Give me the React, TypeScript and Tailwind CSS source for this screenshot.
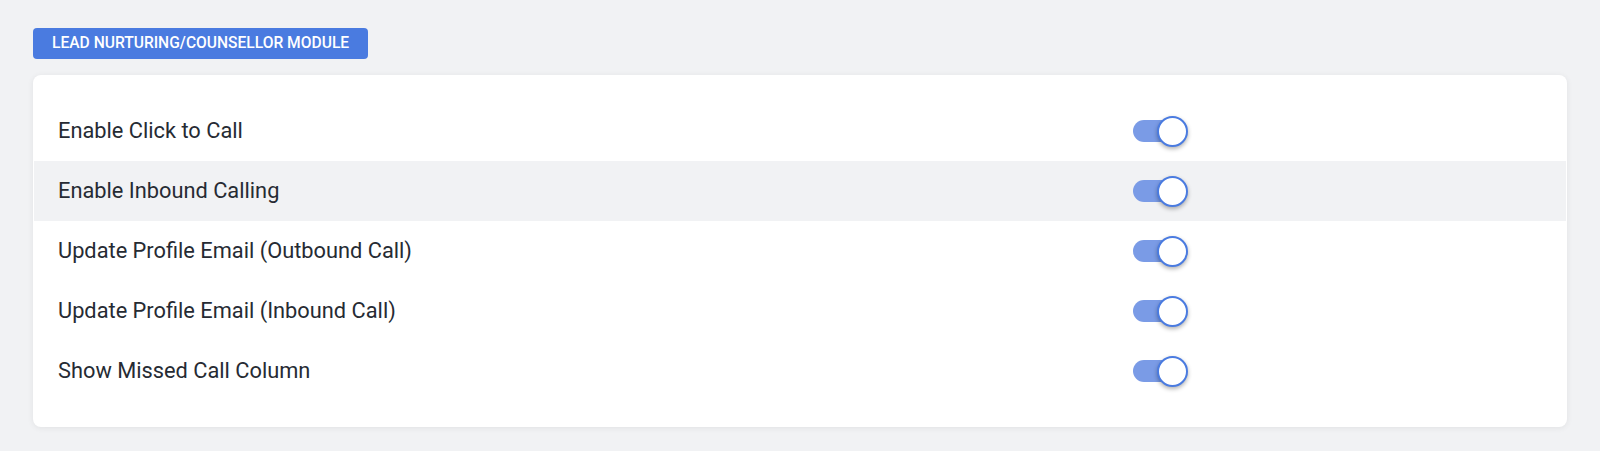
import React, { useState } from 'react';

const rows = [
  'Enable Click to Call',
  'Enable Inbound Calling',
  'Update Profile Email (Outbound Call)',
  'Update Profile Email (Inbound Call)',
  'Show Missed Call Column',
];

const Toggle = ({ on, onClick }: { on: boolean; onClick: () => void }) => (
  <button type="button" onClick={onClick} className="relative flex h-[31px] w-[55px] items-center">
    <span className={`h-[22px] w-[48px] rounded-full ${on ? 'bg-[#7a9be6]' : 'bg-[#c7ccd6]'}`} />
    <span
      className={`absolute top-0 h-[31px] w-[31px] rounded-full border-2 bg-white shadow-[0_2px_4px_rgba(0,0,0,0.3)] ${
        on ? 'left-[24px] border-[#4a7be0]' : 'left-0 border-[#9aa3b2]'
      }`}
    />
  </button>
);

export default function App() {
  const [state, setState] = useState(rows.map(() => true));

  return (
    <div className="min-h-[451px] bg-[#f1f2f4] px-[33px] pt-[28px] font-['Roboto',sans-serif]">
      <div className="inline-flex h-[31px] items-center rounded-[4px] bg-[#4a7be0] px-[19px] text-[15.6px] font-medium text-white">
        LEAD NURTURING/COUNSELLOR MODULE
      </div>
      <div className="mt-[16px] rounded-[8px] bg-white py-[26px] shadow-[0_1px_6px_rgba(0,0,0,0.07)]">
        {rows.map((label, i) => (
          <div
            key={label}
            className={`mx-px flex h-[60px] items-center pl-[24px] ${i === 1 ? 'bg-[#f1f2f4]' : ''}`}
          >
            <div className="w-[1075px] text-[21.8px] text-[#262b33]">{label}</div>
            <Toggle
              on={state[i]}
              onClick={() => setState((s) => s.map((v, j) => (j === i ? !v : v)))}
            />
          </div>
        ))}
      </div>
    </div>
  );
}
